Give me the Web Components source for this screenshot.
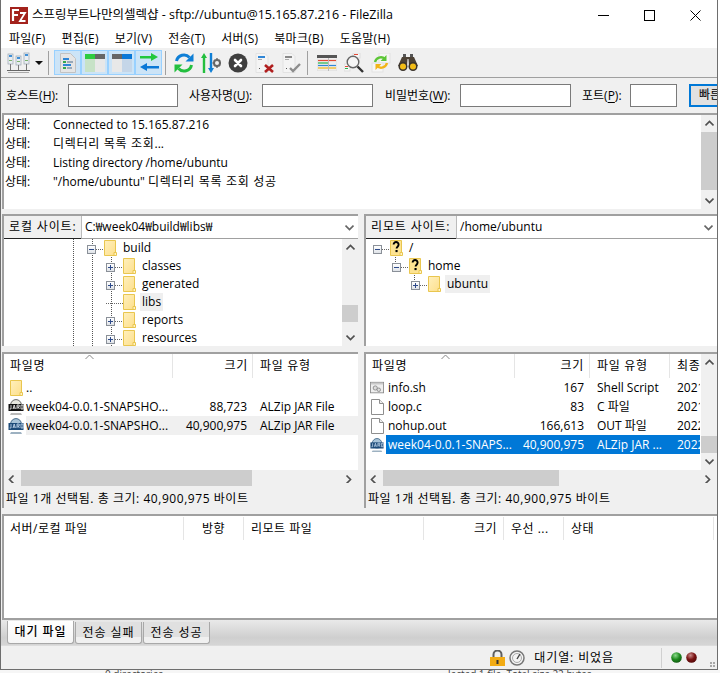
<!DOCTYPE html>
<html lang="ko"><head><meta charset="utf-8"><title>FileZilla</title>
<style>
html,body{margin:0;padding:0;background:#fff;overflow:hidden;height:673px}
body{font:12px/16px "Open Sans","Noto Sans CJK KR",sans-serif;color:#000}
</style></head><body>
<fz-window>
  <fz-titlebar>스프링부트나만의셀렉샵 - sftp://ubuntu@15.165.87.216 - FileZilla</fz-titlebar>
  <fz-menubar items="파일(F)|편집(E)|보기(V)|전송(T)|서버(S)|북마크(B)|도움말(H)"></fz-menubar>
  <fz-toolbar></fz-toolbar>
  <fz-quick></fz-quick>
  <fz-log>
    <fz-logline msg="Connected to 15.165.87.216"></fz-logline>
    <fz-logline msg="디렉터리 목록 조회..."></fz-logline>
    <fz-logline msg="Listing directory /home/ubuntu"></fz-logline>
    <fz-logline msg="&quot;/home/ubuntu&quot; 디렉터리 목록 조회 성공"></fz-logline>
  </fz-log>
  <fz-panes>
    <fz-pane style="--pane-w:356px;--cols:22px 147px 80px 1fr;--name-pad:0px">
      <fz-sitebar slot="site" label="로컬 사이트:" value="C:₩week04₩build₩libs₩" lw="77"></fz-sitebar>
      <fz-tree slot="tree" base="0" scroll>
        <fz-node x="83" kind="minus" icon="folder" guides="69,88">build</fz-node>
        <fz-node x="102" kind="plus" icon="folder" guides="69,88,107">classes</fz-node>
        <fz-node x="102" kind="plus" icon="folder" guides="69,88,107">generated</fz-node>
        <fz-node x="102" kind="leaf" icon="folder" guides="69,88,107" hl>libs</fz-node>
        <fz-node x="102" kind="plus" icon="folder" guides="69,88,107">reports</fz-node>
        <fz-node x="102" kind="plus" icon="folder" guides="69,88,107">resources</fz-node>
      </fz-tree>
      <fz-list slot="list" heads="파일명:l:169:6|크기:r:80:4|파일 유형:l:103:7" sort="81">
        <fz-row icon="folder"><fz-cell>..</fz-cell></fz-row>
        <fz-row icon="jar"><fz-cell>week04-0.0.1-SNAPSHO...</fz-cell><fz-cell r>88,723</fz-cell><fz-cell>ALZip JAR File</fz-cell></fz-row>
        <fz-row icon="jar2" dim><fz-cell>week04-0.0.1-SNAPSHO...</fz-cell><fz-cell r>40,900,975</fz-cell><fz-cell>ALZip JAR File</fz-cell></fz-row>
      </fz-list>
      <fz-hscroll slot="hs" t="17" w="231"></fz-hscroll>
      <fz-panestatus slot="status">파일 1개 선택됨. 총 크기: 40,900,975 바이트</fz-panestatus>
    </fz-pane>
    <fz-pane style="--pane-w:353px;--cols:20px 129px 75px 80px 30px;--name-pad:2px">
      <fz-sitebar slot="site" label="리모트 사이트:" value="/home/ubuntu" lw="90"></fz-sitebar>
      <fz-tree slot="tree">
        <fz-node x="7" kind="minus" icon="unknown">/</fz-node>
        <fz-node x="26" kind="minus" icon="unknown" stub="30">home</fz-node>
        <fz-node x="45" kind="plus" icon="folder" stub="49" hl>ubuntu</fz-node>
      </fz-tree>
      <fz-list slot="list" vscroll heads="파일명:l:149:6|크기:r:75:5|파일 유형:l:80:7|최종:l:30:7" sort="75">
        <fz-row icon="script"><fz-cell>info.sh</fz-cell><fz-cell r>167</fz-cell><fz-cell>Shell Script</fz-cell><fz-cell>2021</fz-cell></fz-row>
        <fz-row icon="doc"><fz-cell>loop.c</fz-cell><fz-cell r>83</fz-cell><fz-cell>C 파일</fz-cell><fz-cell>2021</fz-cell></fz-row>
        <fz-row icon="doc"><fz-cell>nohup.out</fz-cell><fz-cell r>166,613</fz-cell><fz-cell>OUT 파일</fz-cell><fz-cell>2022</fz-cell></fz-row>
        <fz-row icon="jar2" sel><fz-cell>week04-0.0.1-SNAPS...</fz-cell><fz-cell r>40,900,975</fz-cell><fz-cell>ALZip JAR ...</fz-cell><fz-cell>2022</fz-cell></fz-row>
      </fz-list>
      <fz-hscroll slot="hs" t="17" w="176"></fz-hscroll>
      <fz-panestatus slot="status">파일 1개 선택됨. 총 크기: 40,900,975 바이트</fz-panestatus>
    </fz-pane>
  </fz-panes>
  <fz-queue heads="서버/로컬 파일:l:180:6|방향:c:60:0|리모트 파일:l:180:7|크기:r:80:6|우선 ...:l:60:7|상태:l:150:7"></fz-queue>
  <fz-tabs items="대기 파일|전송 실패|전송 성공"></fz-tabs>
  <fz-statusbar>대기열: 비었음</fz-statusbar>
</fz-window>
<fz-desktop></fz-desktop>
<script>
const ICONS={
folder:`<svg width="13" height="16" viewBox="0 0 13 16"><defs><linearGradient id="fg" x1="0" y1="0" x2="1" y2="1"><stop offset="0" stop-color="#fff0bd"/><stop offset="1" stop-color="#fddf8c"/></linearGradient></defs><path d="M.5.5h11v13h-.8v2H.5z" fill="url(#fg)" stroke="#e9c64f"/><path d="M10 15.5v-3h2.5v3z" fill="#fff3c9" stroke="#e9c64f"/></svg>`,
unknown:`<svg width="13" height="16" viewBox="0 0 13 16"><path d="M.5.5h11v13h-.8v2H.5z" fill="#fde392" stroke="#e9c64f"/><path d="M10 15.5v-3h2.5v3z" fill="#fff3c9" stroke="#e9c64f"/><path d="M3.6 4.6c0-3.4 5-3.4 5 0 0 2.2-2 2-2 4" fill="none" stroke="#000" stroke-width="1.9"/><rect x="5.5" y="10" width="2.1" height="2.1"/></svg>`,
jar:`<svg width="16" height="16" viewBox="0 0 16 16"><circle cx="8" cy="6" r="5.4" fill="#e8e8e0" stroke="#666"/><path d="M3 14.5h10l1 1H2z" fill="#777"/><rect x=".5" y="5" width="15" height="7" fill="#111"/><path d="M3 6v4H1.6M5 10l1.2-4 1.2 4M5.3 9h1.8M9 10V6h2.2v2H9m1.3 0 1 2M13 6v4h2V6z" fill="none" stroke="#fff" stroke-width=".8"/></svg>`,
jar2:`<svg width="16" height="16" viewBox="0 0 16 16"><circle cx="8" cy="6" r="5.4" fill="#a9c4d8" stroke="#456a8a"/><path d="M3 14.5h10l1 1H2z" fill="#3d6484"/><rect x=".5" y="5" width="15" height="7" fill="#1c4a78"/><path d="M3 6v4H1.6M5 10l1.2-4 1.2 4M5.3 9h1.8M9 10V6h2.2v2H9m1.3 0 1 2M13 6v4h2V6z" fill="none" stroke="#cfe2f5" stroke-width=".8"/></svg>`,
script:`<svg width="16" height="14" viewBox="0 0 16 14"><rect x=".5" y=".5" width="15" height="12" fill="#eee" stroke="#8a8a8a"/><rect x="1" y="1" width="14" height="2" fill="#c9c9c9"/><circle cx="6" cy="7" r="2.4" fill="#ddd" stroke="#888"/><circle cx="10" cy="9" r="2" fill="#ddd" stroke="#888"/></svg>`,
doc:`<svg width="13" height="16" viewBox="0 0 13 16"><path d="M.5.5h8l4 4v11H.5z" fill="#fff" stroke="#8e8e8e"/><path d="M8.5.5v4h4" fill="#eee" stroke="#8e8e8e"/></svg>`,
site:`<svg width="23" height="21" viewBox="0 0 23 21"><g fill="#e9edf2" stroke="#9aa6b2" stroke-width=".7"><rect x="1" y="2" width="5" height="10"/><rect x="9" y="4" width="5" height="9"/><rect x="17" y="1" width="5" height="11"/></g><g fill="#3f8fd6"><rect x="2" y="3" width="3" height="2"/><rect x="10" y="5" width="3" height="2"/><rect x="18" y="2" width="3" height="2"/></g><g fill="#7bb36b"><rect x="2" y="8" width="3" height="1"/><rect x="10" y="9" width="3" height="1"/><rect x="18" y="8" width="3" height="1"/></g><path d="M3.5 12v6M11.5 13v6M19.5 12v6" stroke="#777"/><path d="M0 18.500h23" stroke="#666"/><path d="M1 20.500h21" stroke="#aaa"/></svg>`,
log:`<svg width="18" height="20" viewBox="0 0 18 20"><path d="M1.500 .5h10l5 5v14h-15z" fill="#e5e5e5" stroke="#c2c2c2"/><rect x="4" y="5" width="6" height="2" fill="#2f86d6"/><rect x="4" y="8" width="3" height="2" fill="#35a84d"/><rect x="8" y="8" width="6" height="2" fill="#98a8b8"/><rect x="4" y="11" width="8" height="2" fill="#2f86d6"/><rect x="4" y="14" width="3" height="2" fill="#35a84d"/><rect x="8" y="14" width="5" height="2" fill="#9ab"/></svg>`,
local:`<svg width="20" height="18" viewBox="0 0 20 18"><rect width="20" height="18" fill="#e4e4e4"/><rect width="10" height="5" fill="#2ecc40"/><rect x="10" width="10" height="5" fill="#666"/><rect y="5" width="10" height="13" fill="#c7e2c7"/><rect x="10" y="5" width="10" height="13" fill="#e8e8e8"/></svg>`,
remote:`<svg width="20" height="18" viewBox="0 0 20 18"><rect y="0" width="10" height="5" fill="#666"/><rect x="10" width="10" height="5" fill="#0a78d7"/><rect y="5" width="10" height="13" fill="#e8e8e8"/><rect x="10" y="5" width="10" height="13" fill="#c5d6e8"/></svg>`,
queue:`<svg width="20" height="19" viewBox="0 0 20 19"><path d="M1 3h11V0l7 4-7 4V5.500H1z" fill="#22c83c"/><path d="M20 13H8v-3l-7 4 7 4v-2.500h12z" fill="#0a78d7"/></svg>`,
refresh:`<svg width="20" height="20" viewBox="0 0 20 20"><path d="M2.500 8A7.500 7.500 0 0 1 15.500 4.500" fill="none" stroke="#0f7fd6" stroke-width="3"/><path d="M19.500 .5v8h-8z" fill="#0f7fd6"/><path d="M17.500 12A7.500 7.500 0 0 1 4.500 15.500" fill="none" stroke="#23bf3f" stroke-width="3"/><path d="M.5 19.500v-8h8z" fill="#23bf3f"/></svg>`,
process:`<svg width="20" height="20" viewBox="0 0 20 20"><path d="M3 0 6 5H4.200v15H1.800V5H0z" fill="#23bf3f"/><path d="M8.800 0h2.400v15H13l-3 5-3-5h1.800z" fill="#0f7fd6"/><circle cx="16" cy="10" r="3" fill="none" stroke="#666" stroke-width="2"/><path d="M16 5v2M16 13v2M11.500 10h2M18.500 10h1.500M13 7l1 1M18 12l1 1M13 13l1-1M18 8l1-1" stroke="#666" stroke-width="1.400"/></svg>`,
cancel:`<svg width="20" height="20" viewBox="0 0 20 20"><circle cx="10" cy="10" r="9.500" fill="#3f3f3f"/><path d="M7 7l6 6M13 7l-6 6" stroke="#fff" stroke-width="2.600" stroke-linecap="round"/></svg>`,
disc:`<svg width="20" height="20" viewBox="0 0 20 20"><path d="M1 .5h9l3 3v16H1z" fill="#f4f4f4" stroke="#e2e2e2"/><rect x="3" y="3" width="7" height="2" fill="#2f86d6"/><rect x="3" y="6" width="4" height="1" fill="#aaa"/><rect x="4" y="15" width="1" height="1" fill="#555"/><path d="M10 12l8 7M18 12l-8 7" stroke="#b01e1e" stroke-width="2.600"/></svg>`,
recon:`<svg width="20" height="20" viewBox="0 0 20 20"><path d="M1 .5h9l3 3v16H1z" fill="#f4f4f4" stroke="#e2e2e2"/><rect x="3" y="3" width="7" height="2" fill="#888"/><rect x="3" y="6" width="4" height="1" fill="#aaa"/><rect x="4" y="15" width="1" height="1" fill="#555"/><path d="M8 15l3 3 7-7" fill="none" stroke="#8d8d8d" stroke-width="2.400"/></svg>`,
filter:`<svg width="20" height="16" viewBox="0 0 20 16"><rect width="20" height="16" fill="#eee" stroke="#ddd"/><rect width="20" height="3" fill="#555"/><path d="M1 5.500h18" stroke="#e34a35" stroke-width="1.200"/><path d="M1 8h10" stroke="#28b44a" stroke-width="1.200"/><path d="M1 10.500h18" stroke="#2f86d6" stroke-width="1.200"/><path d="M1 13h18" stroke="#f0c040" stroke-width="1.500"/><path d="M11.500 3v13" stroke="#bbb"/></svg>`,
search:`<svg width="20" height="20" viewBox="0 0 20 20"><rect x="9" y="0" width="7" height="5" fill="#f7f7f7" stroke="#ddd"/><rect x="10" y="1" width="4" height="1" fill="#e34a35"/><rect x="0" y="11" width="6" height="7" fill="#f7f7f7" stroke="#ddd"/><rect x="1" y="13" width="3" height="1" fill="#e34a35"/><rect x="1" y="15" width="3" height="1" fill="#28b44a"/><circle cx="9" cy="9" r="5.800" fill="#f8f8f8" fill-opacity=".7" stroke="#666" stroke-width="1.400"/><path d="M13.500 13.500l5.500 5.500" stroke="#333" stroke-width="2.400"/></svg>`,
sync:`<svg width="20" height="20" viewBox="0 0 20 20"><rect x="8" y="0" width="11" height="10" fill="#f6f6f6" stroke="#e2e2e2"/><rect x="1" y="10" width="11" height="9" fill="#f6f6f6" stroke="#e2e2e2"/><path d="M4 9a6 6 0 0 1 10-3" fill="none" stroke="#5cc636" stroke-width="2.400"/><path d="M15.500 2v6h-6z" fill="#5cc636"/><path d="M16 10a6 6 0 0 1-10 3" fill="none" stroke="#f2b418" stroke-width="2.400"/><path d="M4.500 17v-6h6z" fill="#f2b418"/></svg>`,
find:`<svg width="20" height="18" viewBox="0 0 20 18"><path d="M5 0h3v6H5zM12 0h3v6h-3z" fill="#555"/><path d="M4 3 0 12h9l.5-7h1l.5 7h9L16 3z" fill="#4d4236"/><circle cx="5" cy="12.500" r="4.500" fill="#3b342c"/><circle cx="15" cy="12.500" r="4.500" fill="#3b342c"/><circle cx="5" cy="12.500" r="3" fill="#f3bd17"/><circle cx="15" cy="12.500" r="3" fill="#f3bd17"/></svg>`,
lock:`<svg width="15" height="16" viewBox="0 0 15 16"><path d="M3.500 7V4.500a4 4 0 0 1 8 0V7" fill="none" stroke="#5f5f5f" stroke-width="2"/><rect y="7" width="15" height="9" fill="#f2ab14"/><rect x="6.500" y="10" width="2" height="4" fill="#333"/></svg>`,
gauge:`<svg width="16" height="16" viewBox="0 0 16 16"><circle cx="8" cy="8" r="7" fill="#f4f4f4" stroke="#777" stroke-width="1.500"/><circle cx="8" cy="8" r="4.500" fill="none" stroke="#aaa"/><path d="M8 9l3-5" stroke="#444" stroke-width="1.400"/></svg>`,
ledg:`<svg width="11" height="11" viewBox="0 0 11 11"><defs><radialGradient id="lg" cx=".4" cy=".3" r=".8"><stop offset="0" stop-color="#8bd98b"/><stop offset=".5" stop-color="#1f8a1f"/><stop offset="1" stop-color="#0b4d0b"/></radialGradient></defs><circle cx="5.500" cy="5.500" r="5.300" fill="url(#lg)"/></svg>`,
ledr:`<svg width="11" height="11" viewBox="0 0 11 11"><defs><radialGradient id="lr" cx=".4" cy=".3" r=".8"><stop offset="0" stop-color="#c98a8a"/><stop offset=".5" stop-color="#7a1313"/><stop offset="1" stop-color="#4a0707"/></radialGradient></defs><circle cx="5.500" cy="5.500" r="5.300" fill="url(#lr)"/></svg>`
};
function def(name,css,html,init){
  customElements.define(name,class extends HTMLElement{
    constructor(){super();const s=this.attachShadow({mode:'open'});
      s.innerHTML=`<style>${css}</style>`+(typeof html==='function'?html(this):html);}
    connectedCallback(){if(init)init(this,this.shadowRoot);}
  });
}
const chev=(d,c='#505050')=>{const p={u:'M1 6l4-4 4 4',d:'M1 2l4 4 4-4',l:'M6 1L2 5l4 4',r:'M2 1l4 4-4 4'}[d];
  return `<svg width="9" height="9" viewBox="0 0 9 9" style="display:block"><path d="${p}" transform="translate(-.5 .5)" fill="none" stroke="${c}" stroke-width="1.700"/></svg>`};

def('fz-window',`:host{display:flex;flex-direction:column;width:716px;height:669px;background:#f0f0f0;border:solid #6e6e6e;border-width:0 1px 1px 1px;box-sizing:content-box;overflow:hidden}`,`<slot></slot>`);

def('fz-titlebar',`:host{display:flex;align-items:center;height:30px;background:#fff;flex:none;padding-left:9px;white-space:nowrap;font-size:12.5px}
 .ic{width:18px;height:17px;background:#a3221c;color:#fff;margin-right:4px;flex:none;display:flex}
 .t{flex:1}.ctl{display:flex;align-items:center;flex:none;margin-right:16px;gap:35px}`,
`<div class="ic"><svg width="18" height="17" viewBox="0 0 18 17"><rect width="18" height="17" fill="#a3221c"/><path d="M3 14V3h6M3 8h5" fill="none" stroke="#fff" stroke-width="2.200"/><path d="M10 6h5l-5 8h5.500" fill="none" stroke="#fff" stroke-width="1.800"/></svg></div>
<span class="t"><slot></slot></span>
<div class="ctl"><svg width="11" height="11"><path d="M0 5.500h11" stroke="#000"/></svg><svg width="11" height="11"><rect x=".5" y=".5" width="10" height="10" fill="none" stroke="#000"/></svg><svg width="11" height="11"><path d="M.5.5l10 10M10.500.5l-10 10" stroke="#000"/></svg></div>`);

def('fz-menubar',`:host{display:flex;height:18px;flex:none;background:#fff;padding-left:8px;gap:16px;align-items:center;white-space:nowrap;letter-spacing:.25px}`,``,
(h,s)=>{h.getAttribute('items').split('|').forEach(t=>{const e=document.createElement('span');e.textContent=t;s.appendChild(e)})});

def('fz-tbtn',`:host{display:flex;width:27px;height:25px;align-items:center;justify-content:center;box-sizing:border-box;flex:none}
 :host([on]){background:#cce4f7;border:1px solid #99d1ff}`,``,
(h,s)=>{s.innerHTML+=ICONS[h.getAttribute('i')]});

def('fz-sep',`:host{display:block;width:1px;height:24px;background:#a0a0a0;flex:none}`,``);

def('fz-toolbar',`:host{display:flex;align-items:center;height:29px;flex:none;background:#f0f0f0;border-bottom:1px solid #a0a0a0;padding-left:4px}
 .dd{width:0;height:0;border:4px solid transparent;border-top-color:#111;border-bottom:0;margin:0 2px 0 3px}`,
`<fz-tbtn i="site"></fz-tbtn><span class="dd"></span><fz-sep style="margin:0 5px 0 3px"></fz-sep>
<fz-tbtn i="log" on></fz-tbtn><fz-tbtn i="local" on></fz-tbtn><fz-tbtn i="remote" on></fz-tbtn><fz-tbtn i="queue" on></fz-tbtn>
<fz-sep style="margin:0 4px 0 3px"></fz-sep>
<fz-tbtn i="refresh"></fz-tbtn><fz-tbtn i="process"></fz-tbtn><fz-tbtn i="cancel"></fz-tbtn><fz-tbtn i="disc"></fz-tbtn><fz-tbtn i="recon"></fz-tbtn>
<fz-sep style="margin:0 5px 0 2px"></fz-sep>
<fz-tbtn i="filter"></fz-tbtn><fz-tbtn i="search"></fz-tbtn><fz-tbtn i="sync"></fz-tbtn><fz-tbtn i="find"></fz-tbtn>`);

def('fz-quick',`:host{display:flex;align-items:center;height:35px;flex:none;background:#f0f0f0;white-space:nowrap;overflow:hidden;padding-left:5px}
 u{text-underline-offset:2px}
 .l{flex:none}
 .i{height:23px;box-sizing:border-box;border:1px solid #7a7a7a;background:#fff;flex:none}
 .b{height:23px;box-sizing:border-box;border:2px solid #0078d7;background:#e1e1e1;flex:none;width:80px;padding:1px 0 0 8px;margin-left:12px}`,
`<span class="l" style="width:62px">호스트(<u>H</u>):</span><span class="i" style="width:110px"></span>
<span class="l" style="width:73px;margin-left:11px">사용자명(<u>U</u>):</span><span class="i" style="width:111px"></span>
<span class="l" style="width:75px;margin-left:12px">비밀번호(<u>W</u>):</span><span class="i" style="width:111px"></span>
<span class="l" style="width:48px;margin-left:11px">포트(<u>P</u>):</span><span class="i" style="width:47px"></span>
<span class="b">빠른연결(Q)</span>`);

def('fz-vscroll',`:host{display:flex;flex-direction:column;width:16px;flex:none;background:#f0f0f0;align-items:stretch;box-sizing:border-box;height:100%}
 .a{height:17px;display:flex;align-items:center;justify-content:center;flex:none}
 .tr{flex:1;min-height:0;display:block}
 .th{background:#cdcdcd;display:block}`,
h=>`<div class="a">${chev('u')}</div><div class="tr"><div class="th" style="margin-top:${h.getAttribute('t')}px;height:${h.getAttribute('h')}px"></div></div><div class="a">${chev('d')}</div>`);

def('fz-hscroll',`:host{display:flex;height:16px;flex:none;background:#f0f0f0;align-items:stretch}
 .a{width:17px;display:flex;align-items:center;justify-content:center;flex:none}
 .tr{flex:1;display:block}.th{background:#cdcdcd;height:100%}`,
h=>`<div class="a">${chev('l')}</div><div class="tr"><div class="th" style="width:${h.getAttribute('w')}px"></div></div><div class="a">${chev('r')}</div>`);

def('fz-logline',`:host{display:flex;height:19px;align-items:center;padding-left:1px;white-space:nowrap}
 .a{width:48px;flex:none}.k{letter-spacing:.7px}`,
h=>{const m=h.getAttribute('msg').replace(/"/g,'&quot;').replace(/[가-힣][가-힣 ]*[가-힣]/g,x=>`<span class="k">${x}</span>`);return `<span class="a">상태:</span><span>${m}</span>`});

def('fz-log',`:host{display:flex;height:94px;flex:none;margin-left:1px;background:#fff;border:solid #a0a0a0;border-width:2px 0 0 2px;box-sizing:content-box}
 .c{flex:1;padding-top:0}
 fz-vscroll{height:94px}`,`<div class="c"><slot></slot></div><fz-vscroll t="0" h="58"></fz-vscroll>`);

def('fz-panes',`:host{display:flex;flex:none;margin-top:5px;padding-left:1px;gap:6px;height:294px}`,`<slot></slot>`);

def('fz-pane',`:host{display:flex;flex-direction:column;width:var(--pane-w);flex:none}
 .t,.l{border:solid #a0a0a0;border-width:2px 0 0 2px;display:flex;flex-direction:column}
 .l{margin-top:6px}`,
`<div class="t"><slot name="site"></slot><slot name="tree"></slot></div>
<div class="l"><slot name="list"></slot><slot name="hs"></slot><slot name="status"></slot></div>`);

def('fz-sitebar',`:host{display:flex;height:23px;flex:none;background:#fff;white-space:nowrap;box-sizing:border-box;border-bottom:1px solid #a0a0a0}
 .l{background:#f0f0f0;border-bottom:1px solid #222;margin-bottom:-1px;display:flex;align-items:center;padding-left:5px;box-sizing:border-box;letter-spacing:.85px}
 .v{flex:1;display:flex;align-items:center;padding-left:3px;border-left:1px solid #bbb;min-width:0}
 .c{width:18px;display:flex;align-items:center;justify-content:center}`,
h=>`<div class="l" style="width:${h.getAttribute('lw')}px">${h.getAttribute('label')}</div><div class="v">${h.getAttribute('value')}</div><div class="c">${chev('d','#666')}</div>`);

def('fz-tree',`:host{display:flex;height:107px;flex:none;background:#fff;overflow:hidden}
 .c{flex:1;min-width:0}`,
h=>`<div class="c"><slot></slot></div>`+(h.hasAttribute('scroll')?`<fz-vscroll t="49" h="17" style="height:107px"></fz-vscroll>`:''));

def('fz-node',`:host{display:flex;height:18px;align-items:center;white-space:nowrap;background-repeat:no-repeat}
 .e{width:9px;height:9px;box-sizing:border-box;border:1px solid #8a9098;background:linear-gradient(#fff,#dfe3e8);flex:none;margin-top:2px;display:block;position:relative}
 .e svg{display:block}
 .d{width:8px;height:1px;flex:none;margin-top:2px;background:repeating-linear-gradient(90deg,#666 0 1px,transparent 1px 2px)}
 .lf{width:17px;height:1px;flex:none;margin-top:2px;background:repeating-linear-gradient(90deg,#666 0 1px,transparent 1px 2px)}
 .f{flex:none;display:flex;width:13px;height:16px}
 .t{margin-left:4px;padding:0 2px;height:18px;line-height:18px}
 :host([hl]) .t{background:#efefef}`,
h=>{const k=h.getAttribute('kind');
 const exp=k==='leaf'?`<span class="lf"></span>`:`<span class="e"><svg width="7" height="7"><path d="M1 3.500h5${k==='plus'?'M3.500 1v5':''}" stroke="#2d4a8a"/></svg></span><span class="d"></span>`;
 return `<span style="width:${h.getAttribute('x')}px;flex:none"></span>${exp}<span class="f">${ICONS[h.getAttribute('icon')]}</span><span class="t"><slot></slot></span>`},
h=>{const g=(h.getAttribute('guides')||'').split(',').filter(Boolean);const dots='repeating-linear-gradient(#555 0 1px,transparent 1px 2px)';
 const st=h.getAttribute('stub');
 if(g.length){h.style.backgroundImage=g.map(()=>dots).join(',');h.style.backgroundSize=g.map(()=>'1px 100%').join(',');h.style.backgroundPosition=g.map(x=>x+'px 0').join(',');}
 if(st){h.style.backgroundImage=dots;h.style.backgroundSize='1px 5px';h.style.backgroundPosition=(+st-1)+'px 0';}});

def('fz-list',`:host{display:flex;height:116px;flex:none;background:#fff;overflow:hidden;font-size:12px}
 .m{flex:1;min-width:0;display:flex;flex-direction:column;position:relative}
 .h{display:flex;height:24px;flex:none;white-space:nowrap}
 .hc{box-sizing:border-box;border-right:1px solid #e5e5e5;display:flex;align-items:center;flex:none;overflow:hidden;letter-spacing:.7px}
 .hc:last-child{border-right:0}
 .s{position:absolute;top:0;width:9px;height:6px}`,
h=>{const hs=h.getAttribute('heads').split('|').map(x=>{const[a,al,w,p]=x.split(':');return `<div class="hc" style="width:${w}px;${al==='r'?`justify-content:flex-end;padding-right:${p}px`:`padding-left:${p}px`}">${a}</div>`}).join('');
 return `<div class="m"><div class="h">${hs}</div><slot></slot><svg class="s" style="left:${h.getAttribute('sort')}px" viewBox="0 0 9 6"><path d="M.5 5l4-4 4 4" fill="none" stroke="#888"/></svg></div>`+(h.hasAttribute('vscroll')?`<fz-vscroll t="65" h="17" style="height:116px"></fz-vscroll>`:'')});

def('fz-row',`:host{display:grid;grid-template-columns:var(--cols);height:19px;align-items:stretch;white-space:nowrap}
 .i{display:flex;align-items:center;justify-content:flex-end;padding-right:2px;box-sizing:border-box;padding-left:4px}`,
h=>`<span class="i" style="${h.getAttribute('icon')==='folder'||h.getAttribute('icon')==='doc'?'justify-content:center':''}">${ICONS[h.getAttribute('icon')]}</span><slot></slot>`,
h=>{if(h.hasAttribute('sel'))h.querySelectorAll('fz-cell').forEach(c=>c.setAttribute('sel',''));
    if(h.hasAttribute('dim'))h.querySelectorAll('fz-cell').forEach(c=>c.setAttribute('dim',''));});

def('fz-cell',`:host{display:flex;align-items:center;overflow:hidden;padding-left:var(--name-pad,2px);padding-right:0;min-width:0}
 :host([r]){justify-content:flex-end;padding-right:6px}
 :host(:nth-of-type(3)),:host(:nth-of-type(4)){padding-left:7px}
 :host([sel]){background:#0078d7;color:#fff}
 :host([dim]){background:#f0f0f0}`,`<slot></slot>`);

def('fz-panestatus',`:host{display:flex;height:22px;flex:none;box-sizing:border-box;padding:3px 0 0 2px;align-items:center;background:#f0f0f0;white-space:nowrap;letter-spacing:.55px}`,`<slot></slot>`);

def('fz-queue',`:host{display:flex;flex-direction:column;height:102px;flex:none;margin:6px 0 0 1px;border:solid #a0a0a0;border-width:2px 0 2px 2px;background:#fff;overflow:hidden}
 .h{display:flex;height:25px;white-space:nowrap;letter-spacing:.5px}
 .c{box-sizing:border-box;flex:none;display:flex;align-items:center;margin:1px 0;border-right:1px solid #e5e5e5}`,
h=>`<div class="h">`+h.getAttribute('heads').split('|').map(x=>{const[a,al,w,p]=x.split(':');
 const st=al==='r'?`justify-content:flex-end;padding-right:${p}px`:al==='c'?'justify-content:center':`padding-left:${p}px`;
 return `<div class="c" style="width:${w}px;${st}">${a}</div>`}).join('')+`</div>`);

def('fz-tabs',`:host{display:flex;height:26px;flex:none;box-sizing:border-box;background:linear-gradient(#e9e9e9,#cfcfcf 70%,#d5d5d5);border-bottom:1px solid #dcdcdc;padding-left:6px;gap:1px;align-items:flex-start}
 .t{width:67px;height:22px;margin-top:2px;box-sizing:border-box;text-align:center;line-height:21px;letter-spacing:.9px;border:1px solid #a8a8a8;border-top:0;border-radius:0 0 3px 3px;background:linear-gradient(#e0e0e0 70%,#f0f0f0 70%)}
 .t.a{background:linear-gradient(#fff,#f5f5f5);height:23px;margin-top:1px;font-weight:500;line-height:22px}`,``,
(h,s)=>{h.getAttribute('items').split('|').forEach((t,i)=>{const e=document.createElement('div');e.className='t'+(i?'':' a');e.textContent=t;s.appendChild(e)})});

def('fz-statusbar',`:host{display:flex;height:23px;flex:none;align-items:center;background:#f0f0f0;justify-content:flex-end;white-space:nowrap}
 .i{display:flex;flex:none}
 .sep{width:1px;height:20px;background:#d0d0d0;margin:0 9px 0 47px;flex:none}
 .g{width:6px;height:6px;margin:14px 1px 0 13px;flex:none;background:radial-gradient(circle at 1px 1px,#a8a8a8 1px,transparent 1px) 0 0/3px 3px}`,
`<span class="i">${ICONS.lock}</span><span class="i" style="margin:0 9px 0 4px">${ICONS.gauge}</span><span style="letter-spacing:.9px"><slot></slot></span><span class="sep"></span><span class="i">${ICONS.ledg}</span><span class="i" style="margin-left:4px">${ICONS.ledr}</span><span class="g"></span>`);

def('fz-desktop',`:host{display:flex;height:3px;overflow:hidden;background:#f6f6f6;color:#444;font-size:10px;line-height:8px;white-space:nowrap}
 span{flex:none}`,`<span style="margin-left:105px">0 directories</span><span style="margin-left:285px">lected 1 file. Total size 22 bytes</span>`);
</script>
</body></html>
